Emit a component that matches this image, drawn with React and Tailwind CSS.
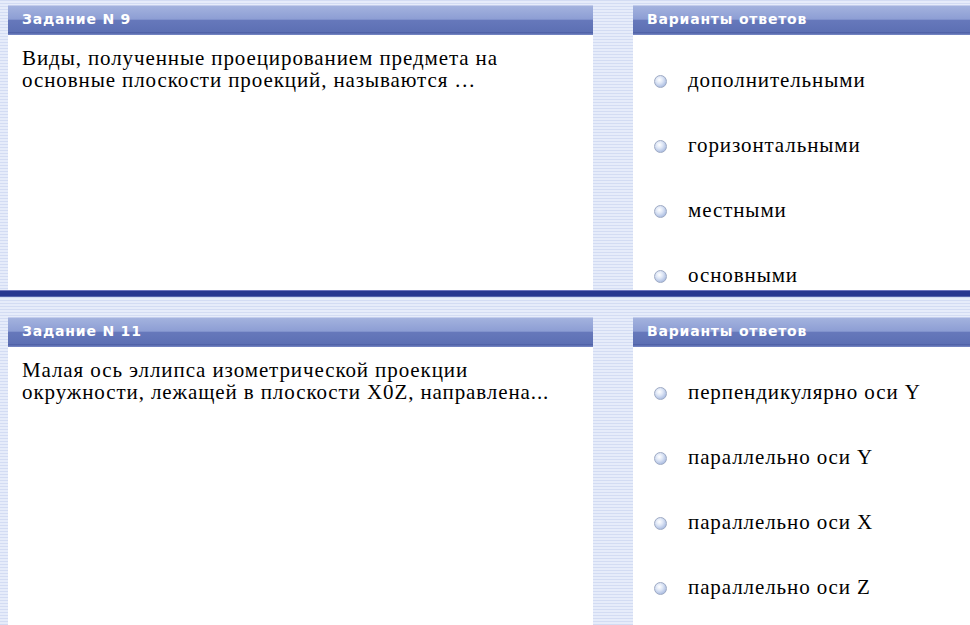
import React from "react";

const stripes =
  "bg-[repeating-linear-gradient(180deg,#d3dcf3_0px,#d3dcf3_1px,#e6ecfa_1px,#e6ecfa_3px)]";

const Header = ({ children }) => (
  <div className="h-[30px] flex flex-col border-t border-[#c3cdec] bg-[linear-gradient(180deg,#a3b2de_0%,#8d9ed4_45%,#6678bb_50%,#5d70b4_88%,#4e60a6_92%,#7b8cc8_100%)]">
    <p className="pl-[14px] pt-[5px] text-white text-[14px] leading-[16px] font-bold tracking-[0.8px] font-['DejaVu_Sans',sans-serif]">
      {children}
    </p>
  </div>
);

const Radio = () => (
  <span className="w-[13px] h-[13px] rounded-full border border-[#9eaac4] bg-[radial-gradient(circle_at_40%_35%,#ffffff_0%,#dfe7f6_35%,#8fa6d6_100%)] shrink-0" />
);

const Task = ({ num, text, answers, tall }) => (
  <div className={"flex pl-[8px] gap-[40px] " + (tall ? "h-[308px]" : "h-[285px]")}>
    <div className="w-[585px] bg-white flex flex-col">
      <Header>Задание N {num}</Header>
      <div className="pl-[14px] pt-[12px] flex flex-col text-[21px] leading-[22px] text-black tracking-[0.9px] font-['Liberation_Serif',serif]">
        {text.map((line) => (
          <p key={line} className="whitespace-nowrap">
            {line}
          </p>
        ))}
      </div>
    </div>
    <div className="flex-1 bg-white flex flex-col">
      <Header>Варианты ответов</Header>
      <div className="flex flex-col pt-[35px] gap-[43px] pl-[21px]">
        {answers.map((a) => (
          <div key={a} className="flex items-center gap-[21px] h-[22px]">
            <Radio />
            <span className="text-[21px] text-black tracking-[0.9px] whitespace-nowrap font-['Liberation_Serif',serif]">
              {a}
            </span>
          </div>
        ))}
      </div>
    </div>
  </div>
);

export default function App() {
  return (
    <div className={"w-[970px] h-[625px] overflow-hidden flex flex-col " + stripes}>
      <div className="h-[5px]" />
      <Task
        num="9"
        text={[
          "Виды, полученные проецированием предмета на",
          "основные плоскости проекций, называются …",
        ]}
        answers={["дополнительными", "горизонтальными", "местными", "основными"]}
      />
      {/* разделитель между слайдами */}
      <div className="h-[7px] border-t border-[#6d74bd] border-b border-b-[#5563ad] bg-[#283791]" />
      <div className="h-[20px]" />
      <Task
        num="11"
        tall
        text={[
          "Малая ось эллипса изометрической проекции",
          "окружности, лежащей в плоскости X0Z, направлена...",
        ]}
        answers={[
          "перпендикулярно оси Y",
          "параллельно оси Y",
          "параллельно оси X",
          "параллельно оси Z",
        ]}
      />
    </div>
  );
}
